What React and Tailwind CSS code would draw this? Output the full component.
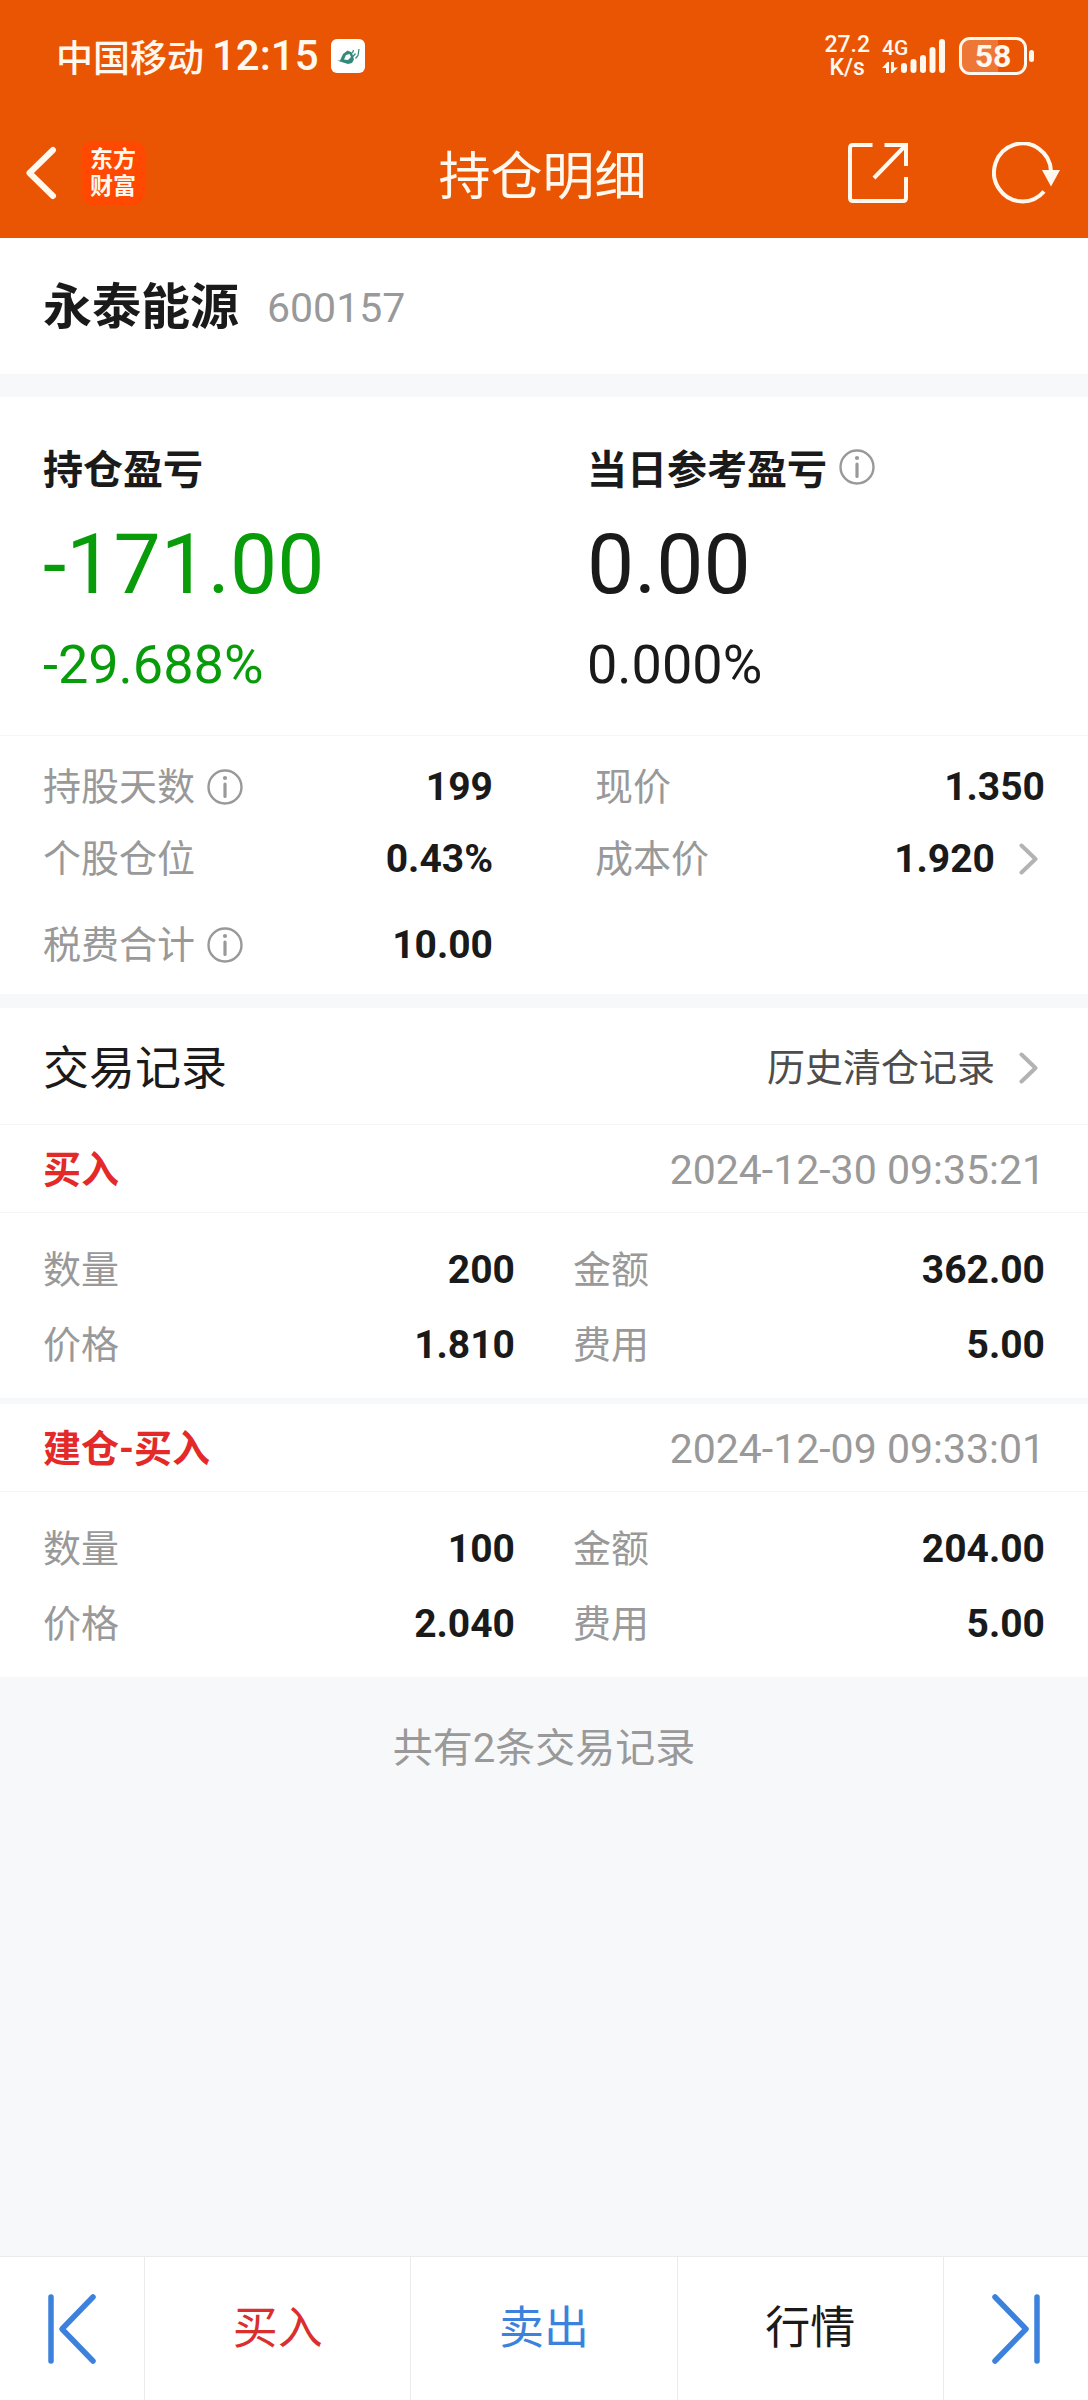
import React from 'react';

const stats = {
  left: [
    { label: '持股天数', value: '199', info: true },
    { label: '个股仓位', value: '0.43%' },
  ],
  right: [
    { label: '现价', value: '1.350' },
    { label: '成本价', value: '1.920', link: true },
  ],
};

const trades = [
  {
    id: 1,
    type: '买入',
    time: '2024-12-30 09:35:21',
    fields: [
      ['数量', '200'],
      ['金额', '362.00'],
      ['价格', '1.810'],
      ['费用', '5.00'],
    ],
  },
  {
    id: 2,
    type: '建仓-买入',
    time: '2024-12-09 09:33:01',
    fields: [
      ['数量', '100'],
      ['金额', '204.00'],
      ['价格', '2.040'],
      ['费用', '5.00'],
    ],
  },
];

const InfoButton = ({ label }) => (
  <button type="button" aria-label={`${label}说明`} className="text-[#999999]">
    <svg width="36" height="36" viewBox="0 0 36 36" fill="none" className="block">
      <circle cx="18" cy="18" r="16.5" stroke="currentColor" strokeWidth="2.4" />
      <circle cx="18" cy="9" r="2.1" fill="currentColor" />
      <path d="M18 15V27.5" stroke="currentColor" strokeWidth="3.2" strokeLinecap="round" />
    </svg>
  </button>
);

const Chevron = () => (
  <svg width="26" height="32" viewBox="0 0 26 32" fill="none" className="block">
    <path d="M2.5 2.5L16.5 16L2.5 29.5" stroke="#b3b3b3" strokeWidth="4" strokeLinecap="round" strokeLinejoin="round" />
  </svg>
);

const StatusBar = () => (
  <div className="flex h-28 items-center justify-between pl-14 pr-[54px] text-[#fff8ee]">
    <div className="flex items-center">
      <span className="font-['Noto_Sans_CJK_SC',sans-serif] text-[37px]/[40px] font-medium">中国移动</span>
      <span className="ml-2 text-[42px]/[40px] font-medium">12:15</span>
      <svg width="34" height="34" viewBox="0 0 34 34" fill="none" className="ml-3">
        <rect width="34" height="34" rx="6" fill="#ffffff" />
        <path d="M6 21.5H9L12 15L16.5 11.5L21 13.5L22 17L23 20.5L21 24L17 25L10.5 23Z" fill="#35897a" />
        <path d="M13 20.5L15 16L18.5 15L20 18L17 21Z" fill="#ffffff" />
        <path d="M22 17.5L24.500 14.5M21.500 14L22.5 11M24.500 19.5L27 16.5L28 10" stroke="#35897a" strokeWidth="1.2" />
      </svg>
    </div>

    <div className="flex items-center">
      <div className="text-center text-[23px]/[23px] font-medium">
        <div>27.2</div>
        <div>K/s</div>
      </div>
      <svg width="63" height="44" viewBox="0 -4 63 44" fill="currentColor" className="ml-3">
        <text x="0" y="17" fontSize="21" fontWeight="500" fontFamily="Roboto, sans-serif">4G</text>
        <path d="M0 30L5.500 24H7V35H4V30Z" />
        <path d="M9 24H12V29.500H16L10.500 35H9Z" />
        <rect x="19" y="25" width="6" height="10" rx="3" />
        <rect x="28.5" y="21" width="6" height="14" rx="3" />
        <rect x="38" y="17" width="6" height="18" rx="3" />
        <rect x="47.5" y="9" width="6" height="26" rx="3" />
        <rect x="57" y="1" width="6" height="34" rx="3" />
      </svg>
      <div className="relative ml-[14px] flex h-[38px] w-[68px] items-center justify-center overflow-hidden rounded-[11px] border-[3px] border-current">
        <div className="absolute inset-y-0 left-0 w-[58%] bg-white/20"></div>
        <span className="relative text-[32px]/[32px] font-bold">58</span>
      </div>
      <div className="ml-[2px] h-3 w-[5px] rounded-full bg-current"></div>
    </div>
  </div>
);

const NavBar = () => (
  <div className="grid h-[126px] grid-cols-[1fr_auto_1fr] items-center pb-1 pl-[25px] pr-7 text-[#fff8ee]">
    <div className="flex items-center gap-6">
      <button type="button" aria-label="返回">
        <svg width="32" height="54" viewBox="0 0 32 54" fill="none" className="block">
          <path d="M28 4L4.500 27L28 50" stroke="currentColor" strokeWidth="6" strokeLinecap="round" strokeLinejoin="round" />
        </svg>
      </button>
      <div className="flex size-16 flex-col items-center justify-center rounded-xl bg-[#ff4800] text-[23px]/[27px] font-bold">
        <span>东方</span>
        <span>财富</span>
      </div>
    </div>
    <h1 className="font-['Noto_Sans_CJK_SC',sans-serif] text-[52px]/[60px]">持仓明细</h1>
    <div className="flex items-center justify-end gap-[84px]">
      <button type="button" aria-label="分享">
        <svg width="60" height="60" viewBox="0 0 60 60" fill="none" stroke="currentColor" strokeWidth="4" className="block">
          <path d="M24.500 2H5Q2 2 2 5V55Q2 58 5 58H55Q58 58 58 55V34" />
          <path d="M36.500 2H58V23" />
          <path d="M26 35L57 3" />
        </svg>
      </button>
      <button type="button" aria-label="刷新">
        <svg width="68" height="62" viewBox="0 0 68 62" fill="none" className="block">
          <path d="M52 49.500A28.500 29 0 1 1 59 29" stroke="currentColor" strokeWidth="4" />
          <path d="M50 28H68L59 44.500Z" fill="currentColor" />
        </svg>
      </button>
    </div>
  </div>
);

const ProfitBlock = ({ title, amount, percent, info, color }) => (
  <div className="px-[43px]">
    <div className="flex h-14 items-center gap-3">
      <h3 className="font-['Noto_Sans_CJK_SC',sans-serif] text-[40px]/[56px] font-bold">{title}</h3>
      {info && <InfoButton label={title} />}
    </div>
    <div className={`mt-6 text-[84px]/[92px] ${color}`}>{amount}</div>
    <div className={`mt-6 text-[54px]/[60px] ${color}`}>{percent}</div>
  </div>
);

const StatRow = ({ label, value, info, link }) => (
  <div className="flex h-[72px] items-center justify-between">
    <div className="flex items-center gap-3 text-[38px]/[48px] text-[#999999]">
      <span>{label}</span>
      {info && <InfoButton label={label} />}
    </div>
    {link ? (
      <button type="button" className="flex items-center gap-6">
        <span className="text-[39px]/[48px] font-bold">{value}</span>
        <Chevron />
      </button>
    ) : (
      <span className="text-[39px]/[48px] font-bold">{value}</span>
    )}
  </div>
);

const TradeCard = ({ trade }) => (
  <article className="bg-white">
    <div className="flex h-[87px] items-center justify-between px-[43px] pt-[2px]">
      <h3 className="text-[38px]/[48px] font-bold text-[#e42a28]">{trade.type}</h3>
      <time className="text-[41px]/[48px] text-[#999999]">{trade.time}</time>
    </div>
    <dl className="grid grid-cols-2 gap-x-[58px] border-t border-[#f5f5f5] px-[43px] pt-[19px] pb-4">
      {trade.fields.map(([label, value]) => (
        <div key={label} className="flex h-[75px] items-center justify-between">
          <dt className="text-[38px]/[48px] text-[#999999]">{label}</dt>
          <dd className="text-[39px]/[48px] font-bold">{value}</dd>
        </div>
      ))}
    </dl>
  </article>
);

const BottomBar = () => (
  <nav className="mt-auto flex h-36 border-t border-[#ebebeb] bg-white text-[45px]/[56px]">
    <button type="button" aria-label="上一只" className="flex w-[145px] items-center justify-center border-r border-[#ebebeb] text-[#3c82dc]">
      <svg width="50" height="72" viewBox="0 0 50 72" fill="none" stroke="currentColor" strokeWidth="5.5" strokeLinecap="round" strokeLinejoin="round">
        <path d="M4 4V68M46 4L15 36L46 68" />
      </svg>
    </button>
    <button type="button" className="flex-1 border-r border-[#ebebeb] text-[#d92f2d]">买入</button>
    <button type="button" className="flex-1 border-r border-[#ebebeb] text-[#3c82dc]">卖出</button>
    <button type="button" className="flex-1 border-r border-[#ebebeb]">行情</button>
    <button type="button" aria-label="下一只" className="flex w-36 items-center justify-center text-[#3c82dc]">
      <svg width="50" height="72" viewBox="0 0 50 72" fill="none" stroke="currentColor" strokeWidth="5.5" strokeLinecap="round" strokeLinejoin="round">
        <path d="M46 4V68M4 4L35 36L4 68" />
      </svg>
    </button>
  </nav>
);

const App = () => {
  return (
    <div className="flex min-h-screen flex-col bg-[#f7f8fa] font-[Roboto,'Noto_Sans_CJK_SC',sans-serif] text-[#1a1a1a]">
      <header className="bg-[#ea5504]">
        <StatusBar />
        <NavBar />
      </header>

      {/* Stock */}
      <section className="flex h-[136px] items-center gap-7 bg-white px-[43px] pt-1">
        <h2 className="text-[49px]/[60px] font-bold">永泰能源</h2>
        <span className="text-[41px]/[60px] text-[#999999]">600157</span>
      </section>

      {/* Profit and position */}
      <section className="mt-[23px] bg-white">
        <div className="grid grid-cols-2 pt-[42px] pb-10">
          <ProfitBlock title="持仓盈亏" amount="-171.00" percent="-29.688%" color="text-[#089c0a]" />
          <ProfitBlock title="当日参考盈亏" amount="0.00" percent="0.000%" color="text-[#1a1a1a]" info />
        </div>
        <div className="border-t border-[#f5f5f5] px-[43px] pt-[15px] pb-[13px]">
          <div className="grid grid-cols-2 gap-x-[102px]">
            <div>
              {stats.left.map((item) => <StatRow key={item.label} {...item} />)}
            </div>
            <div>
              {stats.right.map((item) => <StatRow key={item.label} {...item} />)}
            </div>
          </div>
          <div className="mt-[14px] grid grid-cols-2 gap-x-[102px]">
            <StatRow label="税费合计" value="10.00" info />
          </div>
        </div>
      </section>

      {/* Trade records */}
      <section className="mt-[14px]">
        <div className="flex h-[117px] items-center justify-between border-b border-[#f5f5f5] bg-white px-[43px] pt-[3px]">
          <h2 className="text-[46px]/[56px]">交易记录</h2>
          <a href="#history" className="flex items-center gap-6 text-[38px]/[48px] text-[#4d4d4d]">
            历史清仓记录
            <Chevron />
          </a>
        </div>
        <div className="flex flex-col gap-[6px]">
          {trades.map((trade) => <TradeCard key={trade.id} trade={trade} />)}
        </div>
        <p className="pt-11 pb-10 text-center text-[40px]/[56px] text-[#999999]">共有2条交易记录</p>
      </section>

      <BottomBar />
    </div>
  );
};

export default App;
